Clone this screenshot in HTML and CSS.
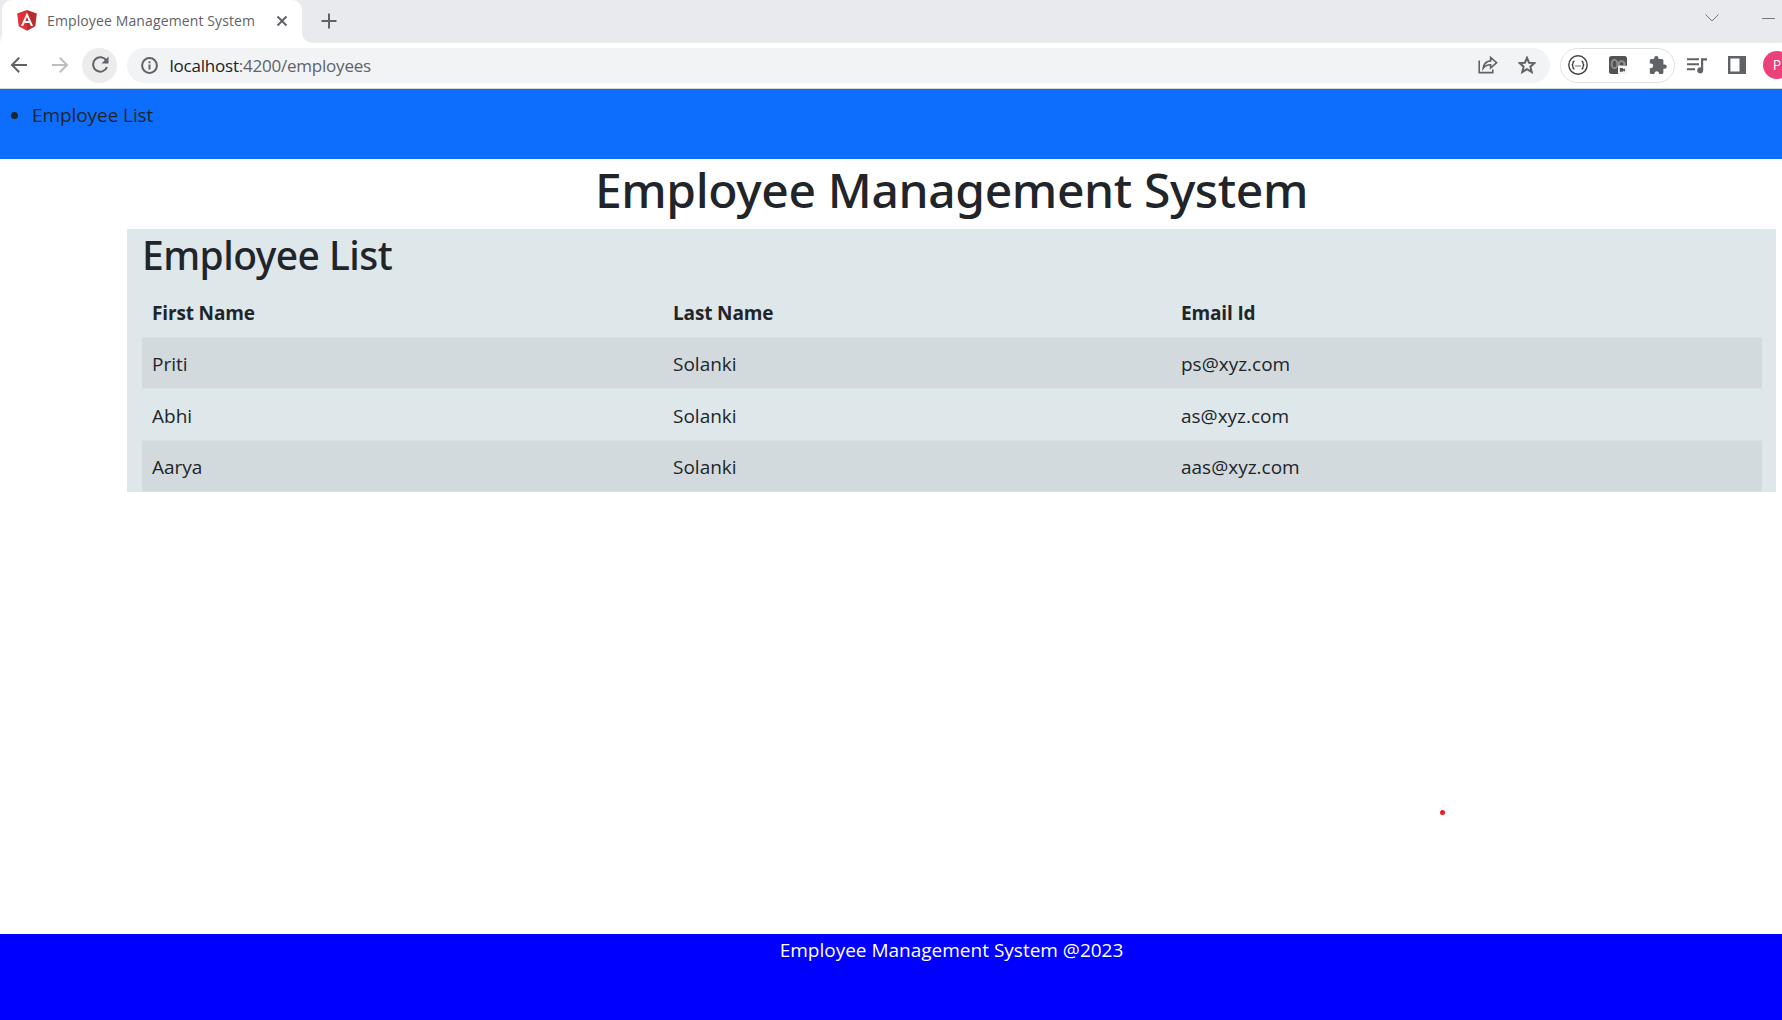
FILE: index.html
```html
<!DOCTYPE html>
<html lang="en">
<head>
<meta charset="utf-8">
<title>Employee Management System</title>
<link rel="stylesheet" href="styles.css">
</head>
<body>
<div class="tab-strip">
  <div class="tab-edge"></div>
  <div class="tab">
    <svg class="tab-logo" viewBox="0 0 20 21"><path fill="#dd3037" d="M10 0 0.2 3.5 1.7 16.2 10 20.8z"/><path fill="#b52e31" d="M10 0 19.8 3.5 18.3 16.2 10 20.8z"/><path fill="#fff" fill-rule="evenodd" d="M10 2.4 3.9 15.9H6.2L7.5 12.9H12.5L13.8 15.9H16.1zM10 6.9 11.7 11H8.3z"/></svg>
    <span class="tab-title">Employee Management System</span>
    <svg class="tab-close" viewBox="0 0 12 12"><path d="M1.5 1.5 10.5 10.5M10.5 1.5 1.5 10.5"/></svg>
  </div>
  <svg class="tab-new" viewBox="0 0 16 16"><path d="M8 .5V15.5M.5 8H15.5"/></svg>
  <div class="window-controls">
    <svg class="chevron" viewBox="0 0 14 8"><path d="M.5 .5 7 7 13.5 .5"/></svg>
    <svg class="minimize" viewBox="0 0 13 2"><path d="M0 .5H13"/></svg>
  </div>
</div>
<div class="toolbar">
  <svg class="arrow" viewBox="0 0 18 18"><path d="M17 9H2.5M9.2 1.8 2 9 9.2 16.2"/></svg>
  <svg class="arrow arrow-forward" viewBox="0 0 18 18"><path d="M1 9H15.5M8.8 1.8 16 9 8.8 16.2"/></svg>
  <div class="reload"><svg viewBox="0 0 18 18"><path fill="none" stroke="#5f6368" stroke-width="2" d="M15.4 4.6A7.2 7.2 0 1 0 16 11.2"/><path fill="#5f6368" d="M17.5 .6V7.6H10.5z"/></svg></div>
  <div class="address">
    <svg class="info" viewBox="0 0 17 17"><circle cx="8.5" cy="8.5" r="7.4"/><path d="M8.5 7.6V12.6M8.5 4.3V6.2"/></svg>
    <span class="url"><span class="host">localhost</span>:4200/employees</span>
    <svg class="share" viewBox="0 0 20 18"><path d="M1.2 4.5V16.6H14.8V13.6M5.2 12.2C5.8 7.6 8.4 5.3 12.6 4.9V1.4L18.6 6.7 12.6 12V8.7C9.4 8.6 7.2 9.6 5.2 12.2z"/></svg>
    <svg class="star" viewBox="0 0 18 18"><path d="M9 1.8 11.1 6.7 16.5 7.1 12.4 10.7 13.7 16 9 13.1 4.3 16 5.6 10.7 1.5 7.1 6.9 6.7z"/></svg>
  </div>
  <div class="extensions">
    <svg class="ext-braces" viewBox="0 0 20 20"><circle cx="10" cy="10" r="9.2"/><path d="M6.5 6.3Q5 6.3 5 8T3.8 10Q5 10 5 12T6.5 13.7M13.5 6.3Q15 6.3 15 8T16.2 10Q15 10 15 12T13.5 13.7"/><path stroke-dasharray="1 1" d="M7.5 11H12.5"/></svg>
    <svg class="ext-cam" viewBox="0 0 18 18"><rect width="18" height="18" rx="2.5" fill="#505254"/><ellipse cx="5.5" cy="8" rx="2.8" ry="4.2" fill="none" stroke="#8b8d8f" stroke-width="2"/><path fill="none" stroke="#8b8d8f" stroke-width="2.4" d="M9.8 10V7A3 3 0 0 1 15.4 7V9"/><rect x="9" y="9.5" width="9" height="8.5" rx="1" fill="#f5f5f5"/><path fill="#55585b" d="M10.8 12H14V13.2L16 12.4V15.6L14 14.8V15.8H10.8z"/></svg>
    <svg class="ext-puzzle" viewBox="0 0 18 18"><path d="M15.6 8.4H14.4V4.5A1.5 1.5 0 0 0 12.9 3H9.5V2.2A2.2 2.2 0 0 0 5.1 2.2V3H2.3A1.5 1.5 0 0 0 .8 4.5V7.4H1.8A2.4 2.4 0 0 1 1.8 12.2H.8V16.5A1.5 1.5 0 0 0 2.3 18H5.5V17A2.3 2.3 0 0 1 10 17V18H12.9A1.5 1.5 0 0 0 14.4 16.5V12.8H15.6A2.2 2.2 0 0 0 15.6 8.4z"/></svg>
  </div>
  <svg class="media" viewBox="0 0 20 17"><path fill="none" stroke="#5f6368" stroke-width="2" d="M0 2.2H12M0 7.2H12M0 12.2H8"/><path fill="#5f6368" d="M14 1.2H20V3.4H16.2V13.2A3 3 0 1 1 14 10.4z"/></svg>
  <svg class="panel-icon" viewBox="0 0 18 18"><path fill="#5f6368" fill-rule="evenodd" d="M0 0H18V18H0zM2.4 2.4V15.6H11.5V2.4z"/></svg>
  <div class="avatar">P</div>
</div>
<header class="site-header">
  <ul class="nav"><li>Employee List</li></ul>
</header>
<main class="content">
  <h1 class="page-title">Employee Management System</h1>
  <section class="card">
    <h2 class="card-title">Employee List</h2>
    <table class="employees">
      <thead><tr><th class="first">First Name</th><th class="last">Last Name</th><th>Email Id</th></tr></thead>
      <tbody>
        <tr><td>Priti</td><td>Solanki</td><td>ps@xyz.com</td></tr>
        <tr><td>Abhi</td><td>Solanki</td><td>as@xyz.com</td></tr>
        <tr><td>Aarya</td><td>Solanki</td><td>aas@xyz.com</td></tr>
      </tbody>
    </table>
  </section>
  <div class="pointer-dot"></div>
</main>
<footer class="site-footer">Employee Management System @2023</footer>
</body>
</html>
```
FILE: styles.css
```css
* { box-sizing: border-box; }
body {
  margin: 0;
  height: 1020px;
  display: flex;
  flex-direction: column;
  overflow: hidden;
  background: #fff;
  color: #212529;
  font: 400 19px/30px "Open Sans", "Noto Sans", sans-serif;
}
svg { display: block; flex: none; }

.tab-strip { display: flex; height: 43px; flex: none; background: #e8eaed; }
.tab-edge { width: 2px; height: 43px; background: linear-gradient(#e8eaed 34px, #fff 43px); }
.tab {
  position: relative;
  display: flex;
  align-items: center;
  width: 300px;
  height: 43px;
  padding: 0 14px 2px 15px;
  border-radius: 10px 10px 0 0;
  background: #fff;
}
.tab::after {
  content: "";
  position: absolute;
  left: 300px;
  bottom: 0;
  width: 10px;
  height: 10px;
  background: radial-gradient(circle at 100% 0, transparent 9.5px, #fff 10px);
}
.tab-logo { width: 20px; height: 21px; }
.tab-title { margin-left: 10px; color: #5f6368; font-size: 14px; line-height: 20px; letter-spacing: 0.12px; white-space: nowrap; }
.tab-close { width: 12px; height: 12px; margin-left: auto; stroke: #5f6368; stroke-width: 2; }
.tab-new { width: 16px; height: 16px; margin: 13px 0 0 19px; stroke: #5f6368; stroke-width: 2; }
.window-controls { display: flex; gap: 43px; margin: 14px 7px 0 auto; }
.chevron { width: 14px; height: 8px; fill: none; stroke: #77797c; }
.minimize { width: 13px; height: 2px; margin-top: 4px; stroke: #77797c; }

.toolbar { display: flex; align-items: center; height: 46px; flex: none; padding: 0 0 1px 10px; border-bottom: 1px solid #d5d7da; }
.arrow { width: 18px; height: 18px; fill: none; stroke: #5f6368; stroke-width: 2; }
.arrow-forward { margin-left: 23px; stroke: #bcbec1; }
.reload { display: flex; align-items: center; justify-content: center; flex: none; width: 35px; height: 35px; margin-left: 13px; border-radius: 50%; background: #ececed; }
.reload svg { width: 18px; height: 18px; }
.address { display: flex; align-items: center; flex: none; width: 1423px; height: 35px; margin-left: 10px; padding: 0 14px; border-radius: 18px; background: #f1f3f4; }
.info { width: 17px; height: 17px; fill: none; stroke: #5f6368; stroke-width: 2; }
.url { margin-left: 11.5px; padding-top: 1px; color: #5f6368; font-size: 17px; line-height: 24px; letter-spacing: -0.22px; white-space: nowrap; }
.host { color: #202124; }
.share { width: 20px; height: 18px; margin-left: auto; fill: none; stroke: #5f6368; stroke-width: 1.6; }
.star { width: 18px; height: 18px; margin-left: 20px; fill: none; stroke: #5f6368; stroke-width: 2; }
.extensions { display: flex; align-items: center; flex: none; width: 115px; height: 35px; margin-left: 10px; padding-left: 7px; border: 1px solid #dfe1e3; border-radius: 18px; }
.ext-braces { width: 20px; height: 20px; fill: none; stroke: #3c4043; stroke-width: 1.4; }
.ext-cam { width: 18px; height: 18px; margin-left: 21px; }
.ext-puzzle { width: 18px; height: 18px; margin-left: 22px; fill: #5f6368; }
.media { width: 20px; height: 17px; margin-left: 12px; }
.panel-icon { width: 18px; height: 18px; margin-left: 21px; }
.avatar { flex: none; width: 28px; height: 28px; margin-left: 17px; border-radius: 50%; background: #ec407a; color: #fff; font-size: 14px; line-height: 28px; text-align: center; }

.site-header { height: 70px; flex: none; padding-top: 11px; background: #0d6efd; }
.nav { margin: 0; padding-left: 11px; list-style: none; letter-spacing: -0.08px; }
.nav li { display: flex; align-items: center; gap: 14px; }
.nav li::before { content: ""; width: 7px; height: 7px; border-radius: 50%; background: #212529; }

.content { position: relative; flex: 1; }
.page-title { margin: 0 6px 0 127px; height: 70px; font: 500 48px/61px "Noto Sans", sans-serif; letter-spacing: -0.38px; text-align: center; }
.card { height: 263px; margin: 0 6px 0 127px; padding: 0 14px 0 15px; background: #dee7ea; }
.card-title { margin: 0; height: 57px; font: 500 39px/51px "Noto Sans", sans-serif; letter-spacing: -0.55px; }
.employees { width: 1620px; border-collapse: separate; border-spacing: 0; table-layout: fixed; }
.employees th, .employees td { height: 51px; padding: 1px 10px 0; border-bottom: 1px solid #dcdfe3; text-align: left; }
.employees th { height: 52px; padding-top: 3px; letter-spacing: -0.15px; }
.employees tbody tr:nth-child(2) td { height: 52px; padding-top: 2px; }
.employees tbody tr:nth-child(3) td { padding-top: 2px; }
.employees .first { width: 521px; }
.employees .last { width: 508px; }
.employees tbody tr:nth-child(odd) { background: #d3dadd; }
.pointer-dot { position: absolute; left: 1440px; top: 651px; width: 5px; height: 5px; border-radius: 50%; background: #ed1c24; }

.site-footer { height: 86px; flex: none; padding: 1px 6px 0 127px; background: #00f; color: #fff; text-align: center; }
```
